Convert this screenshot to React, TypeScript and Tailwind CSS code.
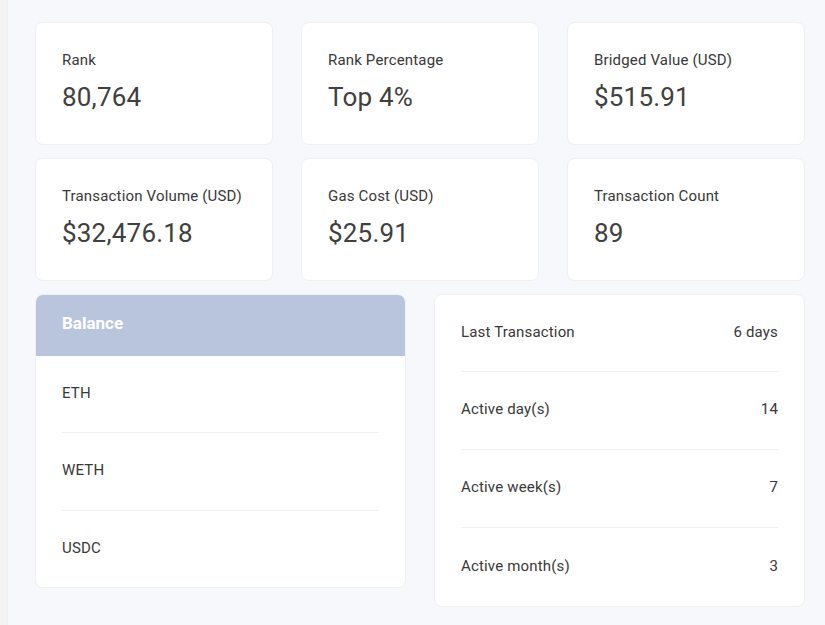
import React from "react";

const stats = [
  { label: "Rank", value: "80,764" },
  { label: "Rank Percentage", value: "Top 4%" },
  { label: "Bridged Value (USD)", value: "$515.91" },
  { label: "Transaction Volume (USD)", value: "$32,476.18" },
  { label: "Gas Cost (USD)", value: "$25.91" },
  { label: "Transaction Count", value: "89" },
];

const balances = [
  { name: "ETH", h: "h-[77px] border-b border-[#eff0f3]" },
  { name: "WETH", h: "h-[78px] border-b border-[#eff0f3]" },
  { name: "USDC", h: "h-[76px]" },
];

const activity = [
  { label: "Last Transaction", value: "6 days", h: "h-[77px] border-b border-[#eff0f3]" },
  { label: "Active day(s)", value: "14", h: "h-[78px] border-b border-[#eff0f3]" },
  { label: "Active week(s)", value: "7", h: "h-[78px] border-b border-[#eff0f3]" },
  { label: "Active month(s)", value: "3", h: "h-[78px]" },
];

export default function App() {
  return (
    <div
      className="flex w-[825px] h-[625px] overflow-hidden text-[#383838]"
      style={{ fontFamily: "Roboto, 'Liberation Sans', sans-serif" }}
    >
      <div className="w-[8px] shrink-0 bg-[#f3f3f4] border-r border-[#eff0f2]" />
      <div className="flex-1 bg-[#f7f8fb] pl-[27px] pr-[20px] pt-[22px]">
        <div className="grid grid-cols-3 gap-x-[28px] gap-y-[13px]">
          {stats.map((s) => (
            <div
              key={s.label}
              className="h-[123px] rounded-[8px] bg-white border border-[#eef0f3] px-[26px] pt-[26px]"
            >
              <div className="text-[15px] leading-[22px] tracking-[0.17px] text-[#383838]">{s.label}</div>
              <div className="mt-[7px] text-[26px] leading-[39px] tracking-[0.2px] text-[#404040]">{s.value}</div>
            </div>
          ))}
        </div>
        <div className="mt-[13px] grid grid-cols-2 gap-x-[28px] items-start">
          <div className="rounded-[8px] bg-white border border-[#eef0f3] overflow-hidden">
            <div className="h-[61px] bg-[#b8c5dd] flex items-center px-[26px] pb-[3px]">
              <span className="text-[17px] font-bold text-white">Balance</span>
            </div>
            <div className="px-[26px]">
              {balances.map((b) => (
                <div
                  key={b.name}
                  className={`${b.h} flex items-center text-[15px] tracking-[0.17px] pb-[2px]`}
                >
                  {b.name}
                </div>
              ))}
            </div>
          </div>
          <div className="rounded-[8px] bg-white border border-[#eef0f3] px-[26px]">
            {activity.map((a) => (
              <div
                key={a.label}
                className={`${a.h} flex items-center justify-between text-[15px] tracking-[0.17px] pb-[2px]`}
              >
                <span>{a.label}</span>
                <span>{a.value}</span>
              </div>
            ))}
          </div>
        </div>
      </div>
    </div>
  );
}
